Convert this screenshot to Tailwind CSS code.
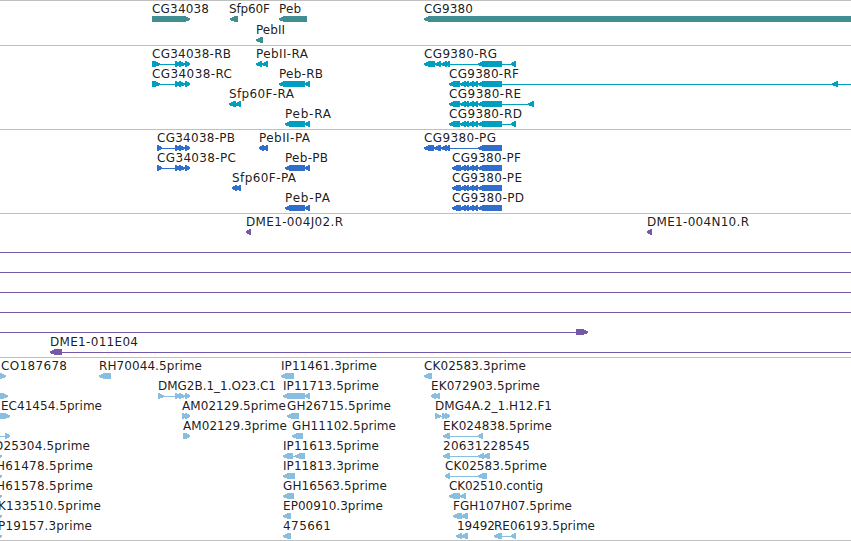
<!DOCTYPE html>
<html lang="en">
<head>
    <meta charset="UTF-8">
    <title>Genome tracks</title>
    <script src="https://cdn.jsdelivr.net/npm/@tailwindcss/browser@4"></script>
</head>
<body class="bg-white text-black w-[851px] h-[541px] overflow-hidden font-['DejaVu_Sans',sans-serif] text-[12px]">
    <main class="flex flex-col border-b border-[#c0c0c0]">
      <section class="h-[45px] border-t border-[#c0c0c0] text-[#408e92]"><svg id="genes" class="block w-full h-full"></svg></section>
      <section class="h-[84px] border-t border-[#c0c0c0] text-[#009fbf]"><svg id="transcripts" class="block w-full h-full"></svg></section>
      <section class="h-[84px] border-t border-[#c0c0c0] text-[#316dcb]"><svg id="proteins" class="block w-full h-full"></svg></section>
      <section class="h-[144px] border-t border-[#c0c0c0] text-[#7658a8]"><svg id="clones" class="block w-full h-full"></svg></section>
      <section class="h-[183px] border-t border-[#c0c0c0] text-[#88bedf]"><svg id="ests" class="block w-full h-full"></svg></section>
    </main>

    <script>
      // feature: [row, label, label start, label end, direction, exons, line end (optional)]
      const L = 'L', R = 'R';
      const tail = [[460, 466], [463, 469], [468, 474], [472, 478], [478, 502]];
      const fwd = [[175, 180], [179, 185], [185, 190]];

      const tracks = {
        genes: [
          [0, 'CG34038', 152, 209, R, [[152, 190]]],
          [0, 'Sfp60F', 229, 270, L, [[230, 238]]],
          [0, 'Peb', 279, 301, L, [[279, 307]]],
          [0, 'CG9380', 424, 473, L, [[424, 860]]],
          [1, 'PebII', 256, 285, L, [[256, 263]]],
        ],
        transcripts: [
          [0, 'CG34038-RB', 152, 231, R, [[152, 160], ...fwd]],
          [0, 'PebII-RA', 256, 308, L, [[256, 262], [262, 268]]],
          [0, 'CG9380-RG', 424, 497, L, [[424, 435], [435, 441], [441, 447], [445, 450], [478, 502], [511, 516]]],
          [1, 'CG34038-RC', 152, 232, R, [[152, 160], ...fwd]],
          [1, 'Peb-RB', 279, 323, L, [[279, 305], [305, 310]]],
          [1, 'CG9380-RF', 449, 519, L, [[449, 460], ...tail, [832, 838]], 851],
          [2, 'Sfp60F-RA', 229, 294, L, [[229, 236], [235, 241]]],
          [2, 'CG9380-RE', 449, 521, L, [[449, 460], ...tail, [528, 534]]],
          [3, 'Peb-RA', 285, 331, L, [[285, 305], [305, 310]]],
          [3, 'CG9380-RD', 449, 522, L, [[449, 460], ...tail, [511, 516]]],
        ],
        proteins: [
          [0, 'CG34038-PB', 157, 235, R, [[157, 162], ...fwd]],
          [0, 'PebII-PA', 259, 310, L, [[259, 264], [263, 268]]],
          [0, 'CG9380-PG', 424, 496, L, [[424, 434], [434, 441], [441, 447], [445, 450], [478, 502]]],
          [1, 'CG34038-PC', 157, 236, R, [[157, 162], ...fwd]],
          [1, 'Peb-PB', 285, 328, L, [[285, 305], [305, 310]]],
          [1, 'CG9380-PF', 452, 521, L, [[452, 461], ...tail]],
          [2, 'Sfp60F-PA', 232, 296, L, [[232, 237], [236, 241]]],
          [2, 'CG9380-PE', 452, 522, L, [[452, 461], ...tail]],
          [3, 'Peb-PA', 285, 330, L, [[285, 305], [305, 310]]],
          [3, 'CG9380-PD', 452, 524, L, [[452, 461], ...tail]],
        ],
        clones: [
          [0, 'DME1-004J02.R', 246, 343, L, [[246, 251]]],
          [0, 'DME1-004N10.R', 647, 749, L, [[647, 652]]],
          [1, '', 0, 0, R, [[-20, -10]], 851],
          [2, '', 0, 0, R, [[-20, -10]], 851],
          [3, '', 0, 0, R, [[-20, -10]], 851],
          [4, '', 0, 0, R, [[-20, -10]], 851],
          [5, '', 0, 0, R, [[-20, -10], [576, 588]]],
          [6, 'DME1-011E04', 50, 138, L, [[50, 62]], 851],
        ],
        ests: [
          [0, 'CO187678', 1, 67, R, [[-10, 6]]],
          [0, 'RH70044.5prime', 99, 202, L, [[99, 111]]],
          [0, 'IP11461.3prime', 281, 377, L, [[281, 294]]],
          [0, 'CK02583.3prime', 424, 526, L, [[424, 432]]],
          [1, '', 0, 0, R, [[-10, 8]]],
          [1, 'DMG2B.1_1.O23.C1', 158, 276, R, [[158, 164], ...fwd]],
          [1, 'IP11713.5prime', 283, 379, L, [[283, 305], [305, 310]]],
          [1, 'EK072903.5prime', 431, 540, L, [[431, 436], [435, 440]]],
          [2, 'EC41454.5prime', 1, 102, R, [[-10, 10]]],
          [2, 'AM02129.5prime', 182, 286, R, [[182, 187], [185, 190]]],
          [2, 'GH26715.5prime', 287, 391, L, [[287, 299]]],
          [2, 'DMG4A.2_1.H12.F1', 435, 552, R, [[435, 441], [442, 447], [445, 450]]],
          [3, '', 0, 0, R, [[-20, -10], [5, 10]]],
          [3, 'AM02129.3prime', 183, 287, R, [[183, 188], [185, 190]]],
          [3, 'GH11102.5prime', 292, 396, L, [[292, 303]]],
          [3, 'EK024838.5prime', 443, 552, L, [[443, 450], [478, 483]]],
          [4, 'D25304.5prime', -6, 90, R, [[-10, 2]]],
          [4, 'IP11613.5prime', 283, 379, L, [[283, 293], [295, 305]]],
          [4, '20631228545', 443, 530, L, [[443, 450], [478, 484], [483, 490]]],
          [5, 'H61478.5prime', -4, 93, R, [[-10, 2]]],
          [5, 'IP11813.3prime', 283, 379, L, [[283, 295]]],
          [5, 'CK02583.5prime', 445, 547, L, [[445, 450], [478, 487]]],
          [6, 'H61578.5prime', -4, 93, R, [[-10, 2]]],
          [6, 'GH16563.5prime', 283, 387, L, [[283, 294]]],
          [6, 'CK02510.contig', 449, 543, L, [[449, 460], [460, 466]]],
          [7, 'K133510.5prime', -2, 101, R, [[-10, 2]]],
          [7, 'EP00910.3prime', 283, 383, L, [[283, 291]]],
          [7, 'FGH107H07.5prime', 453, 572, L, [[453, 462], [461, 468]]],
          [8, 'P19157.3prime', -2, 92, R, [[-10, 2]]],
          [8, '475661', 283, 331, L, [[283, 291]]],
          [8, '19492', 457, 495, L, [[456, 462], [461, 468]]],
          [8, 'RE06193.5prime', 494, 595, L, [[494, 502], [511, 516]]],
        ],
      };

      // exon block, six pixels tall, tapering to a point on its leading side
      function arrow(a, b, dir, y) {
        const t = Math.min(6, b - a);
        const s = dir === L ? 1 : -1;
        const tip = dir === L ? a : b;
        const back = dir === L ? b : a;
        return `<path d="M${tip} ${y - 0.6}L${tip + (t - 1) * s} ${y - 3}H${back}V${y + 3}H${tip + (t - 1) * s}L${tip} ${y + 0.9}Z"/>`;
      }

      for (const id in tracks) {
        // the svg starts one pixel under the track's border
        const pitch = id === 'genes' ? 21 : 20;
        let out = '';
        for (const [row, label, from, to, dir, exons, end] of tracks[id]) {
          const top = row * pitch;
          const x = exons[0][0];
          const x2 = end || exons[exons.length - 1][1];
          out += `<g fill="currentColor" shape-rendering="crispEdges"><rect x="${x}" y="${top + 18}" width="${x2 - x}" height="1"/>`;
          for (const [a, b] of exons) out += arrow(a, b, dir, top + 18);
          out += '</g>';
          if (label) out += `<text x="${from}" y="${top + 12}" textLength="${to - from}" class="fill-black/90">${label}</text>`;
        }
        document.getElementById(id).innerHTML = out;
      }
    </script>
</body>
</html>
